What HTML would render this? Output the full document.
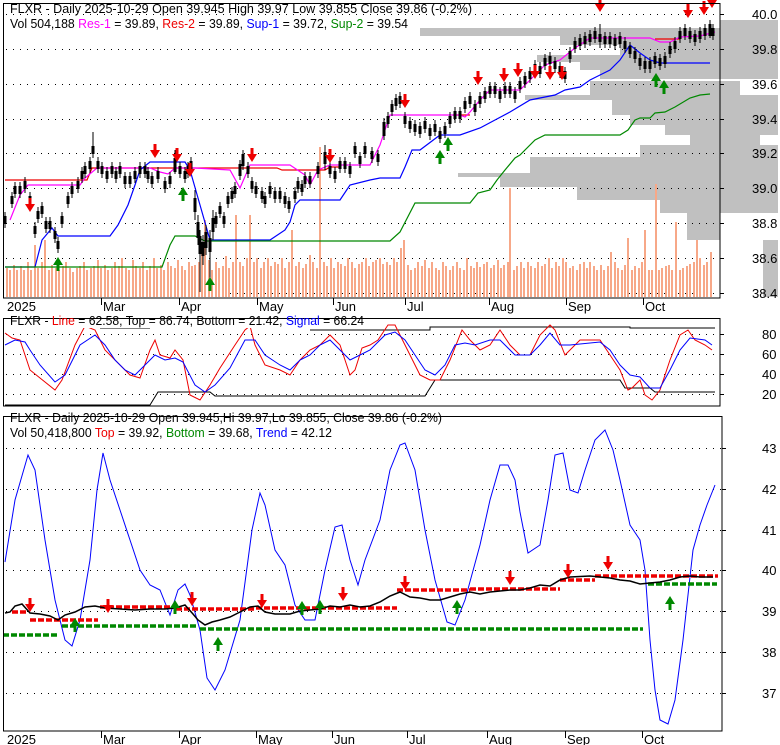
<!DOCTYPE html>
<html><head><meta charset="utf-8"><style>
body{margin:0;background:#fff;}
svg{display:block;font-family:"Liberation Sans",Arial,sans-serif;}
</style></head><body>
<svg width="780" height="745" viewBox="0 0 780 745" xmlns="http://www.w3.org/2000/svg">
<defs>
<g id="dn"><path d="M-1.5 -14h3v6h3.5l-5 8l-5 -8h3.5z" fill="#e00"/></g>
<g id="up"><path d="M-1.5 14h3v-6h3.5l-5 -8l-5 8h3.5z" fill="#080"/></g>
</defs>
<rect width="780" height="745" fill="#fff"/>

<g fill="#c0c0c0">
<rect x="720" y="20" width="58" height="8"/>
<rect x="420" y="28" width="358" height="8"/>
<rect x="560" y="36" width="218" height="9"/>
<rect x="620" y="45" width="158" height="10"/>
<rect x="537" y="55" width="241" height="7"/>
<rect x="580" y="62" width="198" height="8"/>
<rect x="600" y="70" width="178" height="9"/>
<rect x="590" y="81" width="150" height="14"/>
<rect x="525" y="95" width="253" height="5"/>
<rect x="612" y="100" width="166" height="15"/>
<rect x="630" y="115" width="148" height="10"/>
<rect x="665" y="125" width="113" height="10"/>
<rect x="690" y="135" width="70" height="10"/>
<rect x="640" y="145" width="138" height="12"/>
<rect x="530" y="157" width="248" height="16"/>
<rect x="458" y="173" width="320" height="4"/>
<rect x="500" y="177" width="278" height="10"/>
<rect x="577" y="187" width="201" height="13"/>
<rect x="660" y="200" width="118" height="13"/>
<rect x="687" y="213" width="33" height="27"/>
<rect x="763" y="240" width="15" height="57"/>
</g>
<g stroke="#000" stroke-width="1" stroke-dasharray="1 6">
<path d="M6 14.5H720M6 49.5H720M6 84.5H720M6 119.5H720M6 153.5H720M6 188.5H720M6 223.5H720M6 258.5H720M6 293.5H720"/>
</g>
<path stroke="#f7a888" stroke-width="2" fill="none" d="M7 297V268M10 297V270M14 297V265M17 297V270M21 297V266M24 297V270M28 297V262M31 297V270M35 297V245M38 297V268M42 297V262M45 297V240M49 297V270M52 297V265M56 297V268M59 297V270M63 297V266M66 297V262M70 297V268M73 297V272M77 297V268M80 297V266M84 297V262M87 297V270M91 297V268M94 297V266M98 297V260M101 297V268M105 297V265M108 297V270M112 297V268M115 297V262M119 297V266M122 297V258M126 297V268M129 297V270M133 297V260M136 297V266M140 297V268M143 297V262M147 297V270M150 297V266M154 297V258M157 297V268M161 297V265M164 297V270M168 297V262M171 297V266M175 297V268M178 297V260M182 297V266M185 297V270M189 297V262M192 297V266M195 297V265M199 297V262M202 297V250M205 297V220M209 297V260M212 297V270M216 297V262M219 297V268M223 297V266M226 297V256M229 297V268M233 297V262M236 297V215M240 297V262M243 297V266M247 297V258M250 297V215M254 297V262M257 297V258M261 297V268M264 297V262M268 297V258M271 297V266M275 297V262M278 297V264M282 297V258M285 297V268M289 297V262M292 297V230M296 297V266M299 297V262M303 297V268M306 297V264M310 297V255M313 297V262M317 297V268M320 297V147M324 297V262M327 297V266M331 297V258M334 297V268M338 297V262M341 297V264M345 297V266M348 297V258M352 297V262M355 297V268M359 297V264M362 297V262M366 297V258M369 297V266M373 297V262M376 297V260M380 297V258M383 297V264M387 297V262M390 297V265M394 297V258M397 297V262M401 297V248M404 297V240M408 297V265M411 297V270M415 297V268M418 297V262M422 297V266M425 297V260M429 297V268M432 297V262M436 297V268M439 297V270M443 297V262M446 297V266M450 297V270M453 297V266M457 297V262M460 297V268M464 297V270M467 297V258M471 297V266M474 297V268M477 297V262M480 297V267M484 297V264M487 297V262M491 297V268M494 297V265M498 297V260M501 297V268M504 297V265M508 297V262M510 297V188M514 297V270M517 297V266M521 297V262M524 297V268M528 297V262M531 297V266M535 297V268M538 297V262M542 297V266M545 297V264M549 297V258M552 297V268M556 297V262M559 297V266M563 297V258M566 297V262M570 297V268M573 297V266M577 297V270M580 297V264M584 297V262M587 297V268M590 297V262M594 297V266M597 297V270M601 297V265M604 297V270M608 297V266M611 297V252M615 297V262M618 297V268M622 297V270M625 297V265M628 297V238M632 297V270M635 297V266M639 297V268M642 297V262M645 297V230M649 297V270M652 297V270M656 297V184M659 297V270M662 297V268M666 297V266M669 297V265M672 297V270M676 297V222M680 297V270M683 297V268M687 297V266M690 297V264M694 297V262M697 297V240M700 297V258M704 297V265M707 297V262M711 297V252"/>
<path fill="none" stroke="#e00" stroke-width="1.2" d="M5 180H87L92 168H277L282 170H325L330 167H340M453 115H470M655 39H680"/>
<path fill="none" stroke="#f0f" stroke-width="1.2" d="M10 220L20 195L28 185H80L85 178L97 168H150L160 172L168 174L175 168H195L230 170L240 188L250 165H290L305 175L310 185L318 170L330 165H370L380 145L390 115H460L465 117L470 112L480 100L490 90H520L545 65L560 60L575 48L590 38H650L660 42H670L680 37L700 36L715 32"/>
<path fill="none" stroke="#00f" stroke-width="1.2" d="M5 267H35L42 240L52 228L58 236H110L118 225L128 205L135 185L140 170L150 162H185L190 170L200 205L210 240H270L285 230L290 222L295 205L300 200H340L350 185L370 180L380 178H400L405 167L412 150H420L440 135H460L480 128L495 120L510 112L530 100L555 95L565 90L580 87L590 80L600 75L610 70L620 60L630 45L640 53L650 60L660 63H710"/>
<path fill="none" stroke="#080" stroke-width="1.2" d="M5 267H162L170 245L175 236H195L205 241H390L400 232L415 203H470L478 193L490 190L497 180L505 170L515 158L520 155L535 140L545 135H620L628 130L635 120L640 118H650L655 113L665 112L675 107L690 98L700 95L710 94"/>
<path fill="none" stroke="#000" stroke-width="1" d="M5 212v16M12 192v16M15 182v16M20 182v16M25 177v16M30 192v16M35 222v16M38 207v16M42 202v16M46 217v16M50 217v16M55 227v16M58 237v16M62 212v16M68 192v16M72 182v16M78 177v16M82 167v16M85 162v16M90 157v16M93 132v26M98 157v16M102 162v16M107 167v16M112 162v16M116 167v16M120 162v16M125 172v16M130 172v16M135 167v16M140 162v16M145 162v16M148 167v16M152 172v16M158 167v16M165 177v16M170 172v16M175 150v24M180 162v16M185 167v16M188 162v16M191 157v16M195 190v30M198 215v30M200 230v62M203 235v30M206 225v30M210 230v60M213 210v30M216 212v16M220 202v16M224 212v16M228 192v16M232 187v16M235 182v16M240 160v20M243 150v20M248 162v16M252 177v16M256 182v16M262 187v16M265 192v16M270 182v16M275 187v16M280 187v16M285 192v16M289 197v16M295 187v16M298 177v16M302 180v16M305 172v16M310 172v16M318 162v16M325 145v25M330 162v16M335 167v16M340 157v16M345 157v16M350 162v16M355 142v16M360 152v16M365 142v16M372 147v16M378 150v16M384 118v22M388 112v16M392 100v16M396 94v16M400 92v16M405 112v16M410 117v16M415 120v16M420 122v16M425 117v16M430 124v16M435 120v16M440 127v16M445 122v16M450 112v16M455 107v16M460 107v16M465 97v16M470 92v16M475 100v16M480 92v16M485 87v16M490 82v16M495 82v16M500 87v16M505 82v16M510 82v16M515 87v16M520 77v16M525 72v16M530 67v16M535 60v16M540 62v16M545 54v16M550 52v16M555 57v16M560 62v16M565 67v16M570 47v16M575 37v16M580 34v16M585 32v16M590 30v16M595 27v16M600 24v24M605 32v16M610 32v16M615 34v16M620 32v16M625 37v16M630 42v16M635 47v16M640 54v16M645 57v16M650 57v16M655 52v16M660 54v16M665 52v16M670 42v16M675 37v16M680 27v16M685 24v16M690 27v16M695 30v16M700 27v16M705 24v16M710 20v18M713 24v16"/>
<path fill="none" stroke="#000" stroke-width="3" d="M5 216v8M12 196v8M15 186v8M20 186v8M25 181v8M30 196v8M35 226v8M38 211v8M42 206v8M46 221v8M50 221v8M55 231v8M58 241v8M62 216v8M68 196v8M72 186v8M78 181v8M82 171v8M85 166v8M90 161v8M93 146v8M98 161v8M102 166v8M107 171v8M112 166v8M116 171v8M120 166v8M125 176v8M130 176v8M135 171v8M140 166v8M145 166v8M148 171v8M152 176v8M158 171v8M165 181v8M170 176v8M175 158v14M180 166v8M185 171v8M188 166v8M191 161v8M195 198v14M198 222v16M200 236v18M203 242v14M206 232v16M210 238v14M213 218v14M216 216v8M220 206v8M224 216v8M228 196v8M232 191v8M235 186v8M240 164v12M243 154v12M248 166v8M252 181v8M256 186v8M262 191v8M265 196v8M270 186v8M275 191v8M280 191v8M285 196v8M289 201v8M295 191v8M298 181v8M302 184v8M305 176v8M310 176v8M318 166v8M325 152v12M330 166v8M335 171v8M340 161v8M345 161v8M350 166v8M355 146v8M360 156v8M365 146v8M372 151v8M378 154v8M384 122v14M388 116v8M392 104v8M396 98v8M400 96v8M405 116v8M410 121v8M415 124v8M420 126v8M425 121v8M430 128v8M435 124v8M440 131v8M445 126v8M450 116v8M455 111v8M460 111v8M465 101v8M470 96v8M475 104v8M480 96v8M485 91v8M490 86v8M495 86v8M500 91v8M505 86v8M510 86v8M515 91v8M520 81v8M525 76v8M530 71v8M535 64v8M540 66v8M545 58v8M550 56v8M555 61v8M560 66v8M565 71v8M570 51v8M575 41v8M580 38v8M585 36v8M590 34v8M595 31v8M600 34v8M605 36v8M610 36v8M615 38v8M620 36v8M625 41v8M630 46v8M635 51v8M640 58v8M645 61v8M650 61v8M655 56v8M660 58v8M665 56v8M670 46v8M675 41v8M680 31v8M685 28v8M690 31v8M695 34v8M700 31v8M705 28v8M710 24v12M713 28v8"/>
<use href="#dn" x="30" y="212"/><use href="#dn" x="155" y="158"/><use href="#dn" x="177" y="162"/><use href="#dn" x="190" y="177"/><use href="#dn" x="252" y="162"/><use href="#dn" x="330" y="163"/><use href="#dn" x="405" y="108"/><use href="#dn" x="478" y="85"/><use href="#dn" x="504" y="82"/><use href="#dn" x="518" y="77"/><use href="#dn" x="535" y="79"/><use href="#dn" x="550" y="80"/><use href="#dn" x="562" y="80"/><use href="#dn" x="600" y="12"/><use href="#dn" x="688" y="18"/><use href="#dn" x="704" y="15"/><use href="#dn" x="712" y="8"/>
<use href="#up" x="58" y="257"/><use href="#up" x="183" y="187"/><use href="#up" x="210" y="277"/><use href="#up" x="440" y="150"/><use href="#up" x="448" y="137"/><use href="#up" x="656" y="73"/><use href="#up" x="664" y="80"/>
<path d="M3.5 10V3.5H720V298H3.5V10" fill="none" stroke="#000"/>
<path d="M720 14.5h4M720 49.5h4M720 84.5h4M720 119.5h4M720 153.5h4M720 188.5h4M720 223.5h4M720 258.5h4M720 293.5h4" stroke="#000"/>
<g font-size="13" fill="#000">
<text x="10" y="13" textLength="462" lengthAdjust="spacingAndGlyphs">FLXR - Daily 2025-10-29 Open 39.945  High 39.97  Low 39.855  Close 39.86 (-0.2%)</text>
<text x="10" y="28" textLength="398" lengthAdjust="spacingAndGlyphs">Vol 504,188 <tspan fill="#f0f">Res-1</tspan> = 39.89, <tspan fill="#e00">Res-2</tspan> = 39.89, <tspan fill="#00f">Sup-1</tspan> = 39.72, <tspan fill="#080">Sup-2</tspan> = 39.54</text>
</g>
<g font-size="13" fill="#000">
<text x="752" y="19">40.0</text><text x="752" y="54">39.8</text><text x="752" y="89">39.6</text><text x="752" y="124">39.4</text><text x="752" y="158">39.2</text><text x="752" y="193">39.0</text><text x="752" y="228">38.8</text><text x="752" y="263">38.6</text><text x="752" y="298">38.4</text>
</g>
<path stroke="#000" d="M101.5 298v7M179.5 298v7M257.5 298v7M333.5 298v7M405.5 298v7M489.5 298v7M566.5 298v7M643.5 298v7"/>
<g font-size="13"><text x="7" y="311">2025</text><text x="103" y="311">Mar</text><text x="181" y="311">Apr</text><text x="259" y="311">May</text><text x="335" y="311">Jun</text><text x="407" y="311">Jul</text><text x="491" y="311">Aug</text><text x="568" y="311">Sep</text><text x="645" y="311">Oct</text></g>

<g stroke="#000" stroke-dasharray="1 6"><path d="M6 334.5H720M6 354.5H720M6 374.5H720M6 394.5H720"/></g>
<path fill="none" stroke="#000" d="M100 328H150M310 330H430V327H630V328H715M5 405H150L158 392H210L215 396H425L435 380H620L625 388H650L655 392H715"/>
<path fill="none" stroke="#e00" d="M5 333L12 338L20 340L30 370L40 378L55 390L62 380L75 345L85 326L95 330L105 350L120 365L130 375L140 378L150 350L155 340L160 355L170 358L175 350L183 360L190 395L200 400L210 385L220 368L235 345L245 330L250 326L255 345L265 365L280 370L290 375L300 360L310 350L320 345L330 335L340 345L350 375L355 370L362 348L370 345L378 340L388 325L395 325L405 345L420 375L430 380L440 380L450 360L462 330L470 340L480 350L490 345L500 330L510 345L520 355L530 355L540 335L550 325L555 330L565 355L575 345L580 340L600 340L610 355L620 370L628 390L632 388L640 380L645 395L652 400L660 390L670 360L680 335L688 330L695 340L705 345L712 350"/>
<path fill="none" stroke="#00f" d="M5 345L15 340L25 342L30 350L40 365L55 382L65 375L80 345L95 335L105 345L115 360L125 370L135 375L145 365L155 355L165 360L175 358L183 362L195 385L205 392L215 385L230 368L245 340L255 340L265 355L280 365L290 370L300 360L310 355L320 345L330 340L340 350L350 360L360 355L370 350L385 335L395 332L405 340L415 355L425 370L435 375L445 365L455 345L465 343L475 345L490 340L500 340L515 355L530 355L540 345L550 333L560 345L570 345L600 342L610 350L620 365L630 375L640 377L650 388L660 388L670 370L680 350L690 338L705 340L712 345"/>
<rect x="8" y="314" width="358" height="14" fill="#fff"/>
<path d="M3.5 322V318.5H720V406H3.5V322" fill="none" stroke="#000"/>
<path d="M720 334.5h4M720 354.5h4M720 374.5h4M720 394.5h4" stroke="#000"/>
<text x="10" y="325" font-size="13" textLength="354" lengthAdjust="spacingAndGlyphs">FLXR - <tspan fill="#e00">Line</tspan> = 62.58, Top = 86.74, Bottom = 21.42, <tspan fill="#00f">Signal</tspan> = 66.24</text>
<g font-size="13"><text x="762" y="339">80</text><text x="762" y="359">60</text><text x="762" y="379">40</text><text x="762" y="399">20</text></g>

<g stroke="#000" stroke-dasharray="1 6"><path d="M6 448.5H722M6 489.5H722M6 530.5H722M6 570.5H722M6 611.5H722M6 652.5H722M6 693.5H722"/></g>
<path fill="none" stroke="#00f" d="M5 562L15 500L28 455L35 470L45 540L55 600L65 640L72 646L80 620L90 560L97 490L103 453L110 480L120 510L130 540L140 570L150 585L160 590L170 615L178 590L185 584L190 595L200 630L207 678L215 690L225 670L240 620L252 530L260 493L265 505L275 550L285 565L295 605L305 620L315 620L325 570L335 527L342 525L350 560L358 585L365 560L380 520L390 470L400 445L405 443L415 470L425 530L435 580L447 622L455 625L465 600L480 545L490 500L500 465L508 465L515 480L520 512L528 553L540 545L548 500L555 455L563 453L570 490L578 493L585 470L595 440L605 430L613 450L620 480L630 525L640 540L645 570L650 640L655 690L660 720L668 724L675 700L683 640L693 550L700 525L707 505L715 485"/>
<g fill="none" stroke-width="3.5" stroke-dasharray="6 2">
<path stroke="#e00" d="M12 612H27M30 620H98M100 607H175M176 609H255M256 608H397M397 590H470M470 589H560M560 580H595M595 576H718"/>
<path stroke="#080" d="M3 635H58M62 626H198M200 629H643M648 584H717"/>
</g>
<path fill="none" stroke="#000" stroke-width="1.5" d="M5 613L10 612L15 606L22 604L30 613L40 614L50 616L58 620L65 615L75 612L85 607L95 606L105 608L120 609L135 610L150 609L165 609L175 608L185 605L193 614L198 620L205 625L212 622L220 620L230 617L240 612L250 607L258 606L265 612L275 614L290 614L300 611L310 610L320 609L330 606L340 607L350 605L360 607L370 606L380 602L390 596L400 592L410 597L420 598L430 600L440 600L450 597L460 594L470 592L480 594L490 592L500 591L510 590L520 590L530 588L540 585L550 586L560 580L570 577L590 576L600 577L610 578L620 580L630 581L640 584L650 583L660 582L670 580L680 577L690 576L700 577L713 577"/>
<use href="#dn" x="30" y="612"/><use href="#dn" x="108" y="613"/><use href="#dn" x="192" y="606"/><use href="#dn" x="262" y="608"/><use href="#dn" x="343" y="601"/><use href="#dn" x="405" y="590"/><use href="#dn" x="510" y="585"/><use href="#dn" x="568" y="578"/><use href="#dn" x="608" y="570"/>
<use href="#up" x="75" y="618"/><use href="#up" x="175" y="600"/><use href="#up" x="218" y="637"/><use href="#up" x="302" y="601"/><use href="#up" x="320" y="600"/><use href="#up" x="457" y="600"/><use href="#up" x="670" y="596"/>
<rect x="8" y="408" width="436" height="30" fill="#fff"/>
<path d="M3.5 421V416.5H722V731H3.5V421" fill="none" stroke="#000"/>
<path d="M722 448.5h4M722 489.5h4M722 530.5h4M722 570.5h4M722 611.5h4M722 652.5h4M722 693.5h4" stroke="#000"/>
<g font-size="13">
<text x="10" y="422" textLength="432" lengthAdjust="spacingAndGlyphs">FLXR - Daily 2025-10-29 Open 39.945,Hi 39.97,Lo 39.855, Close 39.86 (-0.2%)</text>
<text x="10" y="437" textLength="322" lengthAdjust="spacingAndGlyphs">Vol 50,418,800 <tspan fill="#e00">Top</tspan> = 39.92, <tspan fill="#080">Bottom</tspan> = 39.68, <tspan fill="#00f">Trend</tspan> = 42.12</text>
</g>
<g font-size="13"><text x="762" y="453">43</text><text x="762" y="494">42</text><text x="762" y="535">41</text><text x="762" y="575">40</text><text x="762" y="616">39</text><text x="762" y="657">38</text><text x="762" y="698">37</text></g>
<path stroke="#000" d="M101.5 731v7M179.5 731v7M256.5 731v7M332.5 731v7M407.5 731v7M487.5 731v7M565.5 731v7M642.5 731v7"/>
<g font-size="13"><text x="7" y="744">2025</text><text x="103" y="744">Mar</text><text x="181" y="744">Apr</text><text x="258" y="744">May</text><text x="334" y="744">Jun</text><text x="409" y="744">Jul</text><text x="489" y="744">Aug</text><text x="567" y="744">Sep</text><text x="644" y="744">Oct</text></g>
</svg>
</body></html>
